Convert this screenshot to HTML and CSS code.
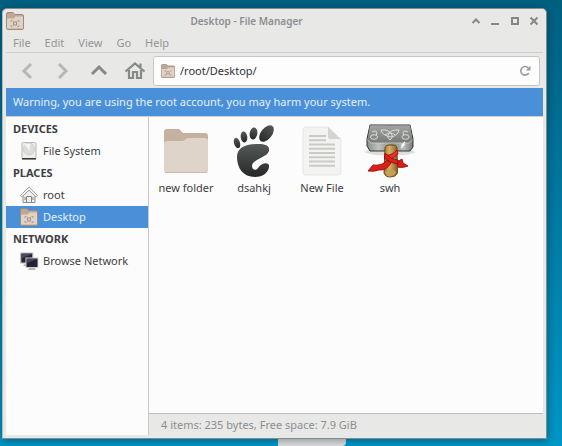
FILE: index.html
```html
<!DOCTYPE html>
<html lang="en">
<head>
<meta charset="utf-8">
<meta name="viewport" content="width=device-width, initial-scale=1">
<title>Desktop - File Manager</title>
<link rel="stylesheet" href="styles.css">
</head>
<body>
<svg class="defs" aria-hidden="true">
  <defs>
    <linearGradient id="ink" x1="0" y1="0" x2="0" y2="1"><stop offset="0" stop-color="#555957"/><stop offset="1" stop-color="#252827"/></linearGradient>
    <linearGradient id="steel" x1="0" y1="0" x2="0" y2="1"><stop offset="0" stop-color="#a2a4a2"/><stop offset="1" stop-color="#777977"/></linearGradient>
    <linearGradient id="face" x1="0" y1="0" x2="1" y2="0"><stop offset="0" stop-color="#8b8d8b"/><stop offset=".25" stop-color="#c0c2c0"/><stop offset=".55" stop-color="#858785"/><stop offset=".8" stop-color="#b9bbb9"/><stop offset="1" stop-color="#787a78"/></linearGradient>
    <linearGradient id="wood" x1="0" y1="0" x2="1" y2="0"><stop offset="0" stop-color="#9c712e"/><stop offset=".4" stop-color="#d9b067"/><stop offset="1" stop-color="#8a5f20"/></linearGradient>
    <symbol id="desktop-folder" viewBox="0 0 18 18">
      <path d="M.5 2Q.5.5 2 .5H7L9 2.500H16Q17.500 2.500 17.500 4V16Q17.500 17.500 16 17.500H2Q.5 17.500.5 16Z" fill="#bea795" stroke="#a18b7b"/>
      <path d="M1 6.500H7.500L9.500 4.500H17V16.500H1Z" fill="#dfd3c8"/>
      <path d="M5 10V8.500H6.500M11.500 8.500H13V10M13 13V14.500H11.500M6.500 14.500H5V13" fill="none" stroke="#b39a87"/>
      <rect x="7.500" y="10" width="3" height="3" fill="none" stroke="#a98f7c"/>
    </symbol>
  </defs>
</svg>
<div class="backdrop-panel"></div>
<main class="window">
  <header class="titlebar">
    <svg class="app-icon" viewBox="0 0 18 18" aria-hidden="true"><use href="#desktop-folder"/></svg>
    <h1 class="title">Desktop - File Manager</h1>
    <div class="window-controls">
      <button aria-label="Roll up"><svg viewBox="0 0 10 10"><path d="M1.500 7L5 3.500 8.500 7"/></svg></button>
      <button aria-label="Minimize"><svg viewBox="0 0 10 10"><path d="M1 8H9"/></svg></button>
      <button aria-label="Maximize"><svg viewBox="0 0 10 10"><path d="M2 2H8V8H2Z"/></svg></button>
      <button aria-label="Close"><svg viewBox="0 0 10 10"><path d="M1.500 1.500L8.500 8.500M8.500 1.500L1.500 8.500"/></svg></button>
    </div>
  </header>
  <nav class="menubar">
    <button>File</button><button>Edit</button><button>View</button><button>Go</button><button>Help</button>
  </nav>
  <div class="toolbar">
    <div class="nav-buttons">
      <button class="dim" aria-label="Back"><svg viewBox="0 0 20 20"><path d="M14 3L7 10 14 17"/></svg></button>
      <button class="dim" aria-label="Forward"><svg viewBox="0 0 20 20"><path d="M6 3L13 10 6 17"/></svg></button>
      <button aria-label="Up"><svg viewBox="0 0 20 20"><path d="M3 13L10 6 17 13"/></svg></button>
      <button aria-label="Home"><svg viewBox="0 0 20 20"><path d="M.5 10.500L10 2.500 19.500 10.500M4 9V17H8V11H12V17H16V9M15.500 6V2.500" stroke-width="2.200"/></svg></button>
    </div>
    <div class="location">
      <svg class="location-icon" viewBox="0 0 18 18" aria-hidden="true"><use href="#desktop-folder"/></svg>
      <input type="text" value="/root/Desktop/" aria-label="Location">
      <button aria-label="Reload"><svg viewBox="0 0 12 12"><path d="M9.300 3A4.300 4.300 0 1 0 9.800 8" fill="none" stroke="#999b9a" stroke-width="1.600"/><path d="M11.500.8V5.500H6.800Z" fill="#999b9a"/></svg></button>
    </div>
  </div>
  <p class="warning">Warning, you are using the root account, you may harm your system.</p>
  <div class="body">
    <aside class="sidebar">
      <h2>DEVICES</h2>
      <a href="#filesystem"><svg viewBox="0 0 18 18" aria-hidden="true"><rect x="2" y=".5" width="14" height="16.500" rx="1.500" fill="#eeeeec" stroke="#b6b8b4"/><ellipse cx="9" cy="7" rx="5.500" ry="6" fill="#dcddda" stroke="#d1d2cf"/><path d="M4.500 3Q7.500 1 10.500 2L9 7Z" fill="#f7f7f6"/><circle cx="9" cy="7" r="1" fill="#f6f6f6"/><path d="M2 16H16V17.500H2Z" fill="#353735"/></svg>File System</a>
      <h2>PLACES</h2>
      <a href="#root"><svg viewBox="0 0 18 18" aria-hidden="true"><path d="M3 9V16.500H15V9L9 4Z" fill="#f0f0ee" stroke="#8d8f8c"/><path d="M6.500 16V10.500H11.500V16M5 11V14M13 11V14" fill="none" stroke="#858784"/><path d="M.3 9.500L9 1.200 17.500 9.500 16 10.800 9 4.300 1.800 10.800Z" fill="#fafafa" stroke="#868885" stroke-width=".8"/></svg>root</a>
      <a class="selected" href="#desktop" aria-current="page"><svg viewBox="0 0 18 18" aria-hidden="true"><use href="#desktop-folder"/></svg>Desktop</a>
      <h2>NETWORK</h2>
      <a href="#network"><svg viewBox="0 0 18 18" aria-hidden="true"><path d="M5 12H9V14H3Z" fill="#aaa"/><rect x=".8" y="1" width="12" height="10" fill="#272637" stroke="#bebfba"/><path d="M2 2H12L2 6Z" fill="#4b4961"/><path d="M10 15H14L16 18H8Z" fill="#b5b7b2"/><rect x="6" y="6" width="12" height="9.500" fill="#242334" stroke="#d0d1cd"/><path d="M7 7H17L7 11Z" fill="#48465e"/></svg>Browse Network</a>
    </aside>
    <section class="content">
      <ul class="files">
        <li><svg viewBox="0 0 48 48" aria-hidden="true"><path d="M2 6Q2 3 5 3H17L21 7H43Q46 7 46 10V45H2Z" fill="#c6b1a0"/><path d="M2 18Q2 15 5 15H20Q22 15 24 13 25 12 27 12H43Q46 12 46 15V44Q46 47 43 47H5Q2 47 2 44Z" fill="#ded4ca"/><path d="M3 46.500H45" stroke="#cbbbad"/></svg><span>new folder</span></li>
        <li><svg viewBox="0 0 48 48" aria-hidden="true"><g fill="url(#ink)"><ellipse cx="36.500" cy="7.500" rx="5.500" ry="9.500" transform="rotate(39 36.500 7.500)"/><ellipse cx="23.500" cy="7.500" rx="3.800" ry="6" transform="rotate(10 23.500 7.500)"/><ellipse cx="14" cy="11" rx="3.300" ry="5.500" transform="rotate(-8 14 11)"/><ellipse cx="7" cy="17" rx="3" ry="5.300" transform="rotate(-18 7 17)"/><path d="M7 31C7 21 17 18 28 18 36 18 40 20 39 25 37 32 22 33 22 40 22 44 26 45 28 42 31 37 40 35 39 41 38 48 31 51 25 51 13 51 7 42 7 31Z"/></g></svg><span>dsahkj</span></li>
        <li><svg viewBox="0 0 48 48" aria-hidden="true"><path d="M8 1H30L43 14V46Q43 49 40 49H8Q5 49 5 46V4Q5 1 8 1Z" fill="#f3f3f1" stroke="#e5e5e3"/><path d="M30 1L43 13H32Q30 13 30 11Z" fill="#d4d4d1"/><path d="M11 10H28M11 14.300H28M11 18.500H37M11 22.800H37M11 27H37M11 31.300H37M11 35.500H37M11 39.800H37" stroke="#cacac7" stroke-width="2"/></svg><span>New File</span></li>
        <li><svg viewBox="0 0 48 48" aria-hidden="true"><ellipse cx="24" cy="26" rx="25" ry="3.500" fill="#ddd"/><path d="M4-1H44L47 13V21L44 25H4L1 20V13Z" fill="url(#face)" stroke="#343634" stroke-linejoin="round"/><path d="M4-.5H44L46.500 14 43 17H5L1.500 14Z" fill="url(#steel)"/><path d="M1.500 14L5 17H43L46.500 14" fill="none" stroke="#cfd0cf" stroke-width=".8"/><g fill="none" stroke="#e4e4e3" stroke-width=".9"><path d="M15 4Q23 3 26 9 27 12 24 14 21 12 22 9 25 3 33 4 32 9 26 11 22 11 19 9 15 7 15 4ZM19 9Q24 5 29 9"/><ellipse cx="8" cy="11" rx="3.500" ry="2.300"/><path d="M6 6Q12 3 10.500 9M42 6Q36 3 37.500 9"/><ellipse cx="39.500" cy="11" rx="3.500" ry="2.300"/></g><path d="M39 16L36 19 38 19 35 22" fill="none" stroke="#fff" stroke-width="1.300"/><path d="M22 35Q31 37 36 33L37 37 42 40Q34 43 29 40L21 37Z" fill="#dc1b17" stroke="#850b09" stroke-width=".8"/><path d="M19 22Q19 19 25 19T31 22L31.500 47Q30 51 24.500 51T18 47Z" fill="url(#wood)" stroke="#634313" stroke-width=".9"/><ellipse cx="24.700" cy="46.500" rx="5" ry="3" fill="#c99f54"/><path d="M18.500 29Q26 30 31 24L32 28Q26 34 18.500 33Z" fill="#ee312c" stroke="#970d0b" stroke-width=".8"/><path d="M19 27Q24 33 32 34V38Q23 37 18.500 31Z" fill="#e0211d" stroke="#8a0c0a" stroke-width=".8"/><path d="M21 34Q17 40 7 39L2 45Q8 46 13 44 20 45 25 37Z" fill="#df1d19" stroke="#850b09" stroke-width=".8"/></svg><span>swh</span></li>
      </ul>
      <footer class="status">4 items: 235 bytes, Free space: 7.9 GiB</footer>
    </section>
  </div>
</main>
</body>
</html>
```
FILE: styles.css
```css
* { box-sizing: border-box; }
body {
  margin: 0;
  min-height: 100vh;
  padding: 8px 15px 7px 2px;
  display: flex;
  background: linear-gradient(#005f80, #0078a0 45%, #0096c6);
  color: #3c4043;
  font: 11px/22px "Noto Sans", "Open Sans", sans-serif;
}
h1, h2, p, ul { margin: 0; padding: 0; font-size: 11px; }
button { border: 0; padding: 0; background: none; color: inherit; font: inherit; }
svg { display: block; overflow: visible; }
.defs { position: absolute; width: 0; height: 0; }
.backdrop-panel {
  position: absolute;
  left: 278px;
  bottom: 0;
  width: 68px;
  height: 12px;
  border-radius: 0 0 4px 0;
  background: #e2e2e2;
}
.window {
  position: relative;
  flex: 1;
  min-width: 0;
  display: flex;
  flex-direction: column;
  padding: 0 3px 3px;
  border: 1px solid #878a89;
  border-left-color: #b5babb;
  border-radius: 5px 5px 0 0;
  background: #e8e8e7;
  box-shadow: 0 2px 8px rgba(0, 25, 40, .4);
}
.titlebar {
  height: 24px;
  display: grid;
  grid-template-columns: 72px 1fr 72px;
  align-items: center;
  color: #8b8e8f;
}
.app-icon { width: 18px; height: 18px; }
.title { font-size: 10px; font-weight: 600; text-align: center; padding-right: 56px; }
.window-controls { display: flex; justify-content: space-between; padding-right: 4px; }
.window-controls svg { width: 10px; height: 10px; fill: none; stroke: #858887; stroke-width: 2; }
.menubar {
  height: 20px;
  display: flex;
  gap: 14px;
  padding-left: 7px;
  border-bottom: 1px solid #cececc;
  color: #929595;
}
.menubar button { line-height: 20px; }
.toolbar { height: 35px; display: flex; align-items: center; padding-right: 3px; }
.nav-buttons { width: 147px; display: flex; gap: 16px; padding-left: 11px; }
.nav-buttons svg { width: 20px; height: 20px; fill: none; stroke: #858988; stroke-width: 3; }
.nav-buttons .dim { opacity: .5; }
.location {
  flex: 1;
  min-width: 0;
  height: 30px;
  display: flex;
  align-items: center;
  gap: 5px;
  padding: 0 8px 0 7px;
  border: 1px solid #c6c6c2;
  border-radius: 3px;
  background: #fdfdfd;
}
.location-icon { width: 14px; height: 14px; }
.location input {
  flex: 1;
  min-width: 0;
  border: 0;
  padding: 0;
  outline: 0;
  background: none;
  color: #303436;
  font: inherit;
}
.location button svg { width: 12px; height: 12px; }
.warning {
  height: 28px;
  padding-left: 7px;
  background: #4a90d9;
  color: #e6f0fa;
  line-height: 28px;
}
.body {
  flex: 1;
  display: grid;
  grid-template-columns: 143px 1fr;
  border-top: 1px solid #cfcfcc;
}
.sidebar { padding-top: 1px; border-right: 1px solid #c8c8c5; background: #fcfcfc; }
.sidebar h2 { padding-left: 7px; font-weight: 700; }
.sidebar a {
  height: 22px;
  display: flex;
  align-items: center;
  gap: 5px;
  padding-left: 14px;
  color: inherit;
  text-decoration: none;
}
.sidebar svg { width: 18px; height: 18px; }
.sidebar .selected { background: #4a90d9; color: #e6f0fa; }
.content { display: flex; flex-direction: column; background: #fcfcfc; }
.files {
  flex: 1;
  display: flex;
  flex-wrap: wrap;
  align-content: flex-start;
  padding: 9px 3px;
  list-style: none;
}
.files li { width: 68px; display: flex; flex-direction: column; align-items: center; gap: 3px; white-space: nowrap; }
.files svg { width: 48px; height: 48px; }
.status { height: 22px; padding-left: 12px; border-top: 1px solid #bfbfbd; background: #e8e8e7; color: #8b8e8f; }
```
